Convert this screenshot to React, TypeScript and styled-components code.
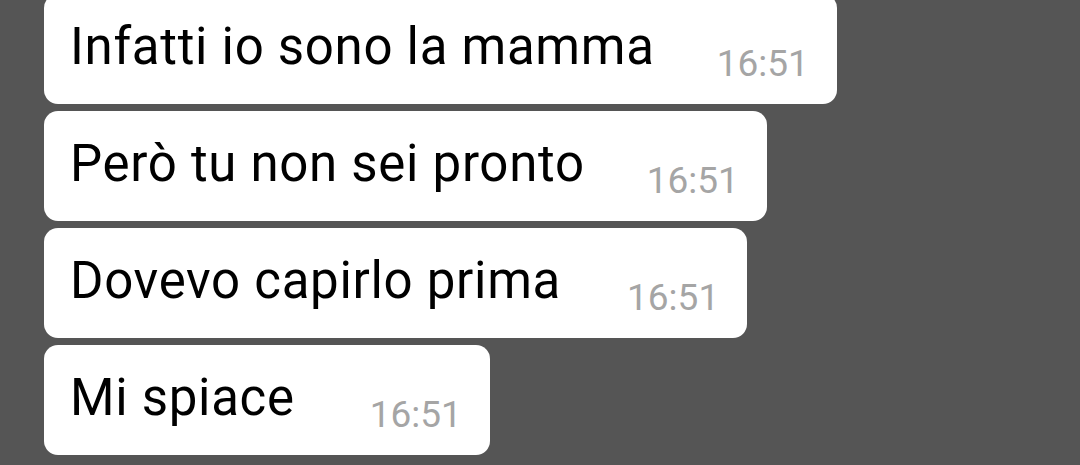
import React from 'react';
import styled, { createGlobalStyle } from 'styled-components';

const GlobalStyle = createGlobalStyle`
  html, body {
    margin: 0;
    padding: 0;
    background: #555555;
    overflow: hidden;
  }
  body {
    font-family: Roboto, "Noto Sans", sans-serif;
  }
`;

const messages = [
  { text: 'Infatti io sono la mamma', gap: 62 },
  { text: 'Però tu non sei pronto', gap: 62 },
  { text: 'Dovevo capirlo prima', gap: 66 },
  { text: 'Mi spiace', gap: 75 },
];

const App = () => {
  return (
    <>
      <GlobalStyle />
      <Chat>
        {messages.map((m) => (
          <Bubble key={m.text} $gap={m.gap}>
            <Text>{m.text}</Text>
            <Time>16:51</Time>
          </Bubble>
        ))}
      </Chat>
    </>
  );
};

const Chat = styled.div`
  width: 1080px;
  height: 465px;
  background: #555555;
  display: flex;
  flex-direction: column;
  align-items: flex-start;
  gap: 7px;
  padding: 0 0 0 44px;
  margin-top: -6px;
  box-sizing: border-box;
`;

const Bubble = styled.div<{ $gap: number }>`
  height: 110px;
  box-sizing: border-box;
  background: #ffffff;
  border-radius: 14px;
  display: flex;
  align-items: flex-start;
  gap: ${(p) => p.$gap}px;
  padding: 0 28px 0 26px;
  flex-shrink: 0;
`;

const Text = styled.span`
  font-size: 51px;
  line-height: 60px;
  letter-spacing: 0.7px;
  color: #000000;
  margin-top: 23px;
  white-space: nowrap;
`;

const Time = styled.span`
  font-size: 37px;
  line-height: 44px;
  color: #a5a5a5;
  margin-top: 48px;
  white-space: nowrap;
`;

export default App;
